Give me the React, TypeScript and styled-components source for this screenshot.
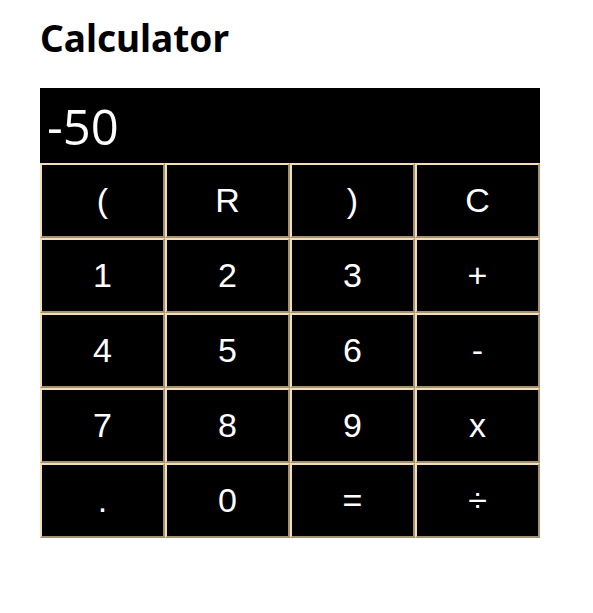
import React from "react";
import styled, { createGlobalStyle } from "styled-components";

const Global = createGlobalStyle`
  body { margin: 8px; background: #fff; font-family: "Noto Sans", "Open Sans", sans-serif; }
`;

const Page = styled.div`
  padding: 0 32px;
`;

const Title = styled.h1`
  font-family: "Noto Sans", sans-serif;
  font-size: 37px;
  font-weight: 700;
  margin: 6px 0 26px;
  height: 48px;
  line-height: 48px;
`;

const Calc = styled.div`
  width: 500px;
  display: flex;
  flex-direction: column;
`;

const Display = styled.div`
  height: 75px;
  background: #000;
  color: #fff;
  font-family: "Open Sans", sans-serif;
  font-size: 49px;
  display: flex;
  align-items: center;
  padding: 0 7px;
  box-sizing: border-box;
`;

const Grid = styled.div`
  display: grid;
  grid-template-columns: repeat(4, 125px);
  grid-auto-rows: 75px;
`;

const Key = styled.button`
  background: #000;
  color: #fff;
  border: 2px outset #f5deb3;
  font-family: "Liberation Sans", Arial, sans-serif;
  font-size: 34px;
  padding: 0;
  margin: 0;
  cursor: pointer;
`;

const keys = ["(", "R", ")", "C", "1", "2", "3", "+", "4", "5", "6", "-", "7", "8", "9", "x", ".", "0", "=", "÷"];

export default function App() {
  return (
    <Page>
      <Global />
      <Title>Calculator</Title>
      <Calc>
        <Display>-50</Display>
        <Grid>
          {keys.map((k) => (
            <Key key={k}>{k}</Key>
          ))}
        </Grid>
      </Calc>
    </Page>
  );
}
